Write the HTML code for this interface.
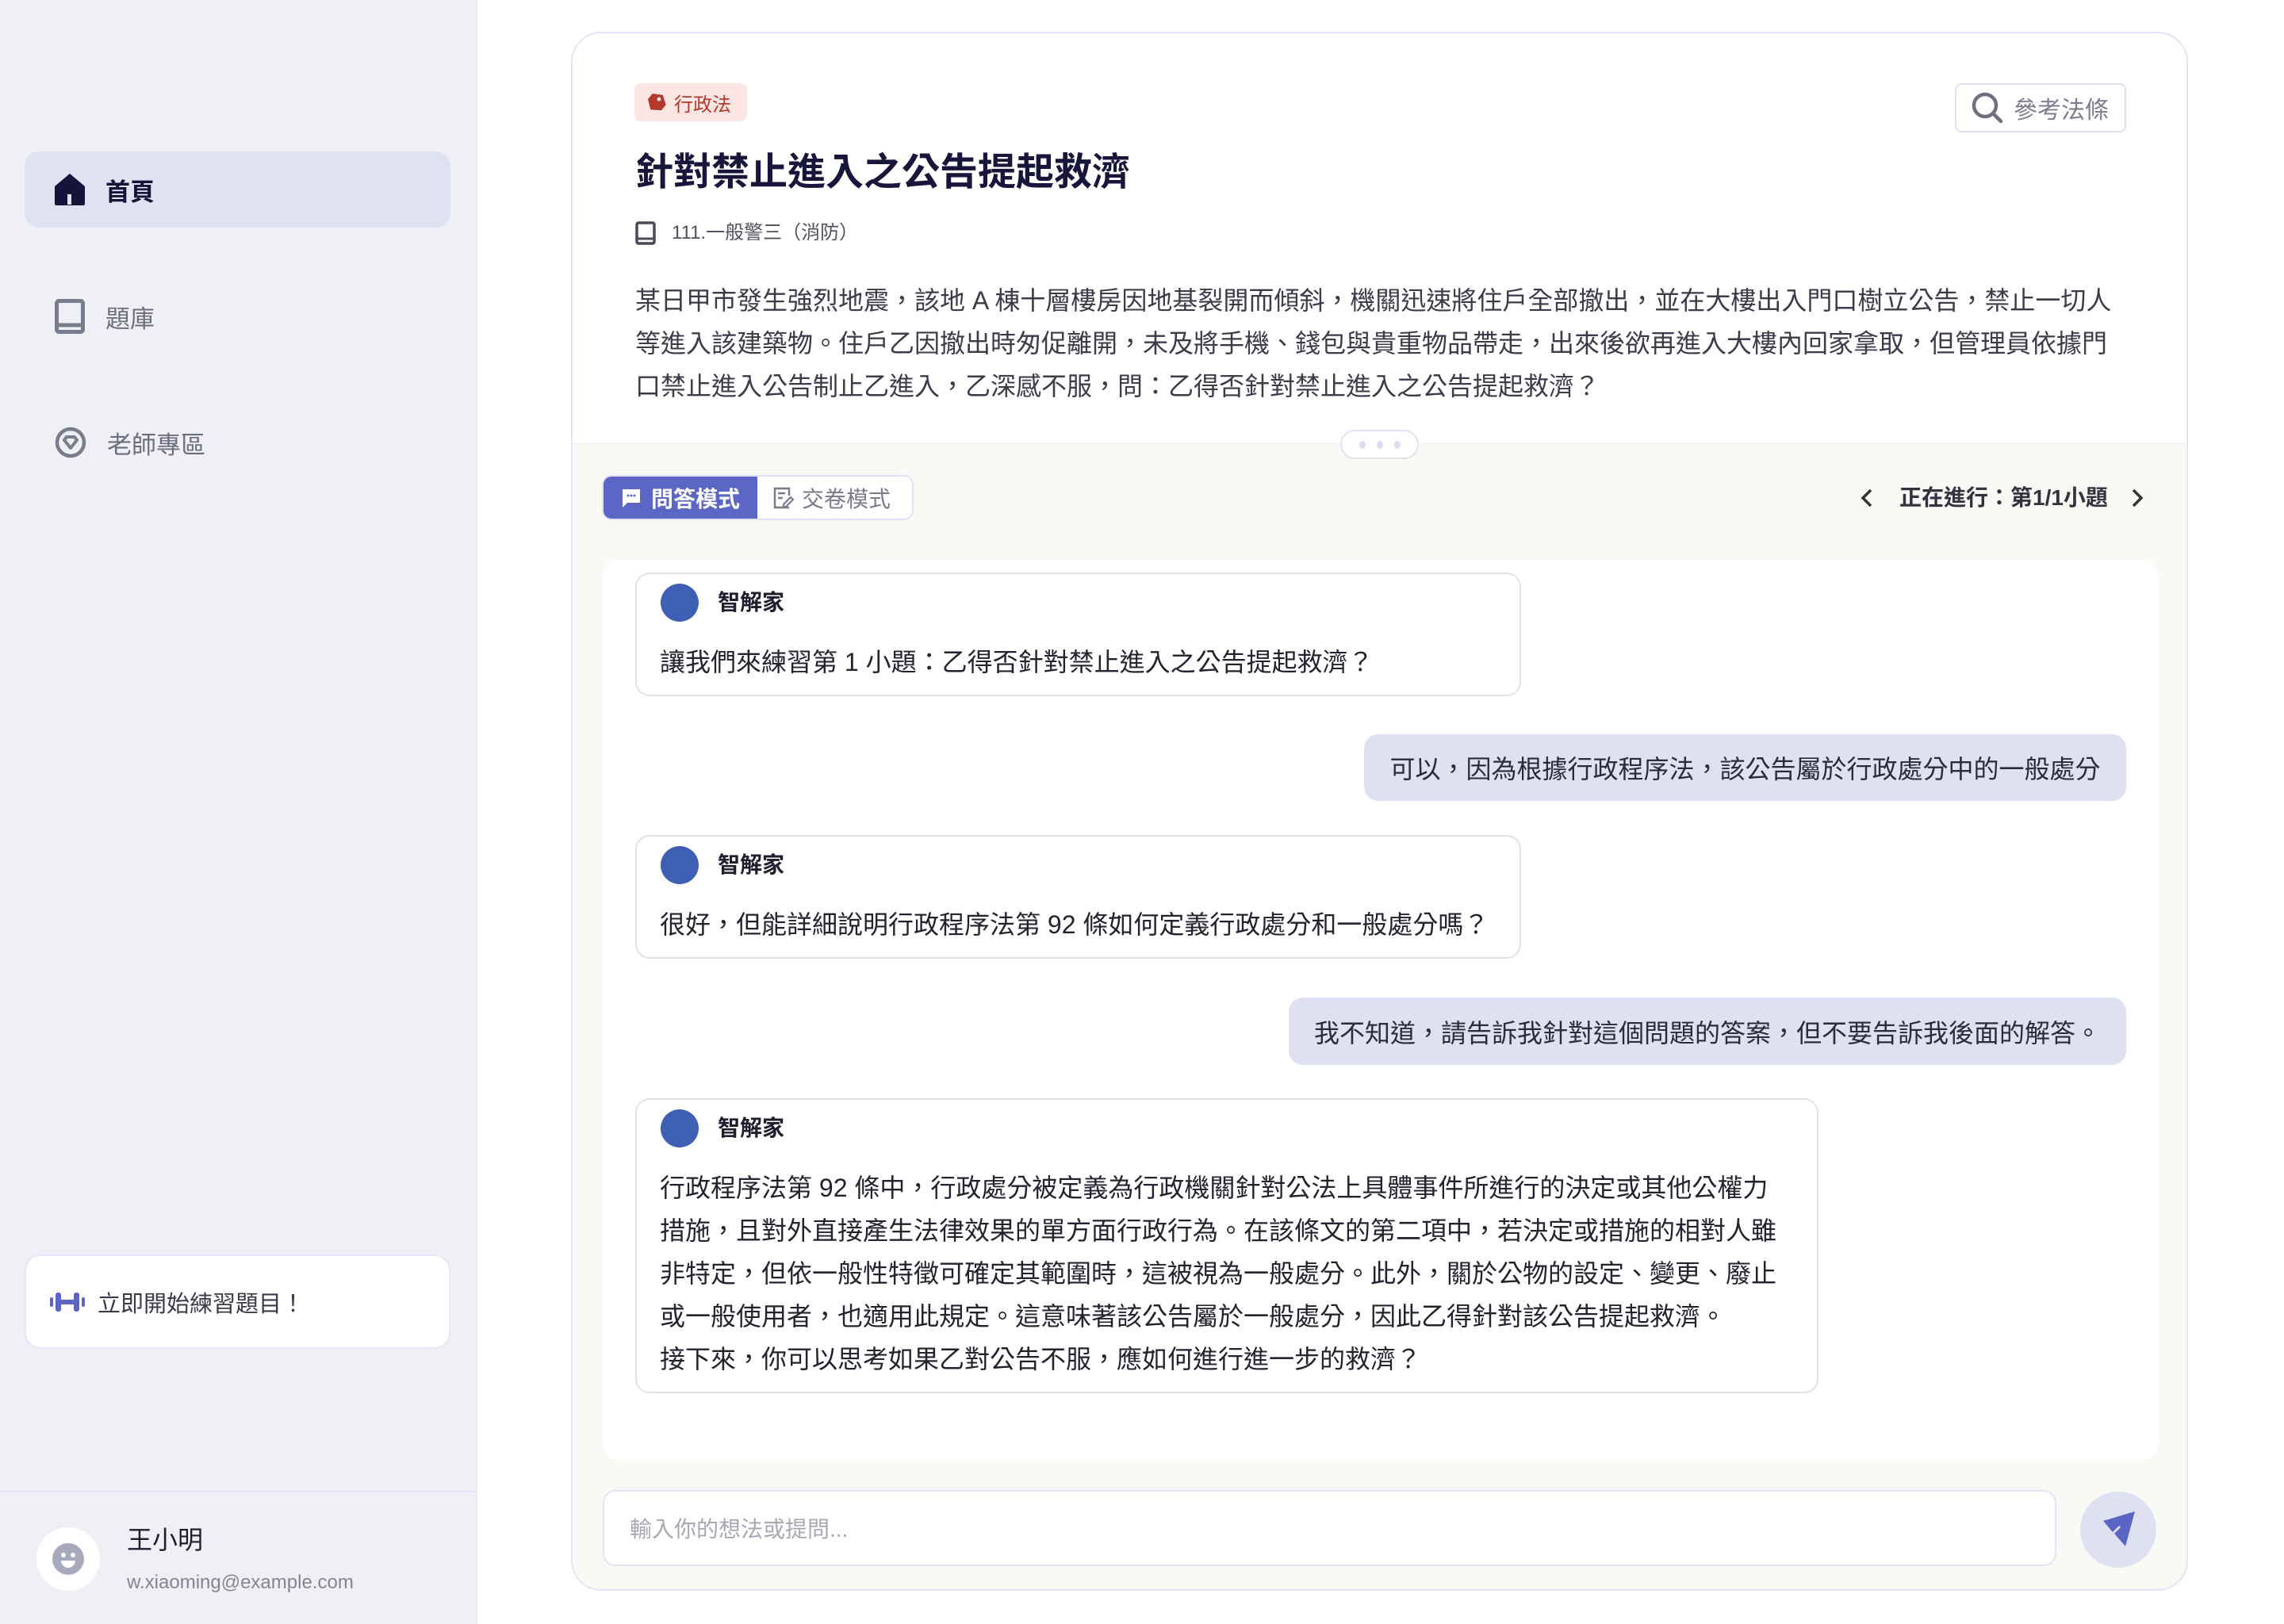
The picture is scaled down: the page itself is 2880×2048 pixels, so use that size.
<!DOCTYPE html>
<html><head><meta charset="utf-8"><style>
*{margin:0;padding:0;box-sizing:border-box}
body{width:2880px;height:2048px;position:relative;background:#fff;font-family:"Liberation Sans","Noto Sans CJK TC",sans-serif;color:#2b2b3a;overflow:hidden}
.a{position:absolute}
.side{left:0;top:0;width:602px;height:2048px;background:#eff0f5;border-right:2px solid #e6e6f6}
.nav{left:31px;width:537px;height:96px;border-radius:18px;display:flex;align-items:center;padding-left:38px;font-size:31px;color:#6d6d80}
.nav svg{margin-right:26px}
.card{left:720px;top:40px;width:2039px;height:1966px;border:2px solid #e4e4f7;border-radius:38px;background:#f9f9f6;overflow:hidden}
.top{left:0;top:0;width:100%;height:518px;background:#fff;border-bottom:1px solid #efefec}
.bubble{background:#fff;border:2px solid #dfe2ea;border-radius:18px}
.bot .av{position:absolute;left:30px;top:12px;width:48px;height:48px;border-radius:50%;background:#3e5fb3}
.bot .nm{position:absolute;left:102px;top:14px;font-size:28px;font-weight:bold;color:#1e1e2e;line-height:44px}
.bot .tx{position:absolute;left:29px;font-size:32px;line-height:54px;white-space:nowrap;color:#23232f}
.user{background:#dfe1f2;border-radius:18px;font-size:32px;color:#2b2b3a;display:flex;align-items:center;justify-content:center;white-space:nowrap}
</style></head><body>
<div class="a side">
  <div class="a nav" style="top:191px;background:#e0e2f2;color:#15133a;font-weight:bold">
    <svg width="38" height="40" viewBox="0 0 38 40"><path d="M19 0 L38 16 V38 a2 2 0 0 1-2 2 H2 a2 2 0 0 1-2-2 V16 Z" fill="#15133a"/><rect x="16" y="26" width="5" height="13" fill="#e0e2f2"/></svg>首頁</div>
  <div class="a nav" style="top:351px">
    <svg width="38" height="44" viewBox="0 0 38 44"><rect x="2.5" y="2.5" width="33" height="39" rx="3" fill="none" stroke="#7b7b8e" stroke-width="5"/><line x1="2.5" y1="33" x2="35" y2="33" stroke="#7b7b8e" stroke-width="5"/></svg>題庫</div>
  <div class="a nav" style="top:510px">
    <svg width="40" height="40" viewBox="0 0 40 40"><circle cx="20" cy="20" r="17" fill="none" stroke="#7b7b8e" stroke-width="4.5"/><path d="M12 17 L15 13 H25 L28 17 L20 27 Z" fill="none" stroke="#7b7b8e" stroke-width="4" stroke-linejoin="round"/></svg>老師專區</div>
  <div class="a" style="left:31px;top:1582px;width:537px;height:119px;background:#fff;border:2px solid #e6e6f6;border-radius:20px;display:flex;align-items:center;padding-left:30px;font-size:29px;color:#3a3a48">
    <svg width="44" height="26" viewBox="0 0 44 26" style="margin-right:16px"><rect x="0" y="7" width="4" height="12" rx="2" fill="#5b66c4"/><rect x="7" y="1" width="7" height="24" rx="3" fill="#5b66c4"/><rect x="14" y="10" width="16" height="6" fill="#5b66c4"/><rect x="30" y="1" width="7" height="24" rx="3" fill="#5b66c4"/><rect x="40" y="7" width="4" height="12" rx="2" fill="#5b66c4"/></svg>立即開始練習題目！</div>
  <div class="a" style="left:0;top:1880px;width:600px;height:2px;background:#e4e4f6"></div>
  <div class="a" style="left:46px;top:1926px;width:80px;height:80px;border-radius:50%;background:#fff"></div>
  <svg class="a" style="left:66px;top:1946px" width="40" height="40" viewBox="0 0 40 40"><circle cx="20" cy="20" r="20" fill="#a9a9bd"/><circle cx="14" cy="15" r="3" fill="#fff"/><circle cx="26" cy="15" r="3" fill="#fff"/><path d="M11 22 H29 A9 9 0 0 1 11 22Z" fill="#fff"/></svg>
  <div class="a" style="left:160px;top:1922px;font-size:32px;color:#1e1e2e;line-height:40px">王小明</div>
  <div class="a" style="left:160px;top:1981px;font-size:24px;color:#858592;line-height:30px">w.xiaoming@example.com</div>
</div>

<div class="a card">
  <div class="a top"></div>
  <div class="a" style="left:78px;top:63px;width:142px;height:48px;background:#fce6e4;border-radius:8px;display:flex;align-items:center;padding-left:16px;font-size:24px;color:#b3392c">
    <svg width="24" height="26" viewBox="0 0 24 26" style="margin-right:10px"><path d="M12 1 L23 8 V17 L12 25 L1 17 V8Z" fill="#b3392c" transform="rotate(40 12 13)"/><circle cx="15" cy="9" r="2.5" fill="#fce6e4"/></svg>行政法</div>
  <div class="a" style="left:1743px;top:63px;width:216px;height:62px;border:2px solid #e0e0f5;border-radius:8px;display:flex;align-items:center;padding-left:18px;font-size:30px;color:#7c7c8e">
    <svg width="42" height="42" viewBox="0 0 42 42" style="margin-right:12px"><circle cx="18" cy="18" r="14" fill="none" stroke="#6f6f82" stroke-width="4.5"/><line x1="28" y1="28" x2="38" y2="38" stroke="#6f6f82" stroke-width="4.5" stroke-linecap="round"/></svg>參考法條</div>
  <div class="a" style="left:79px;top:146px;font-size:48px;font-weight:bold;color:#18163a;line-height:60px">針對禁止進入之公告提起救濟</div>
  <div class="a" style="left:79px;top:236px;font-size:24px;color:#50505e;line-height:32px;display:flex;align-items:center">
    <svg width="26" height="30" viewBox="0 0 26 30" style="margin-right:20px"><rect x="2" y="2" width="22" height="26" rx="2" fill="none" stroke="#4a4a58" stroke-width="3.5"/><line x1="2" y1="22" x2="24" y2="22" stroke="#4a4a58" stroke-width="3"/></svg>111.一般警三（消防）</div>
  <div class="a" style="left:79px;top:310px;font-size:32px;line-height:54px;color:#3b3b4a;white-space:nowrap">某日甲市發生強烈地震，該地 A 棟十層樓房因地基裂開而傾斜，機關迅速將住戶全部撤出，並在大樓出入門口樹立公告，禁止一切人<br>等進入該建築物。住戶乙因撤出時匆促離開，未及將手機、錢包與貴重物品帶走，出來後欲再進入大樓內回家拿取，但管理員依據門<br>口禁止進入公告制止乙進入，乙深感不服，問：乙得否針對禁止進入之公告提起救濟？</div>
  <div class="a" style="left:968px;top:500px;width:99px;height:37px;border:2px solid #e2e2f6;border-radius:19px;background:#fff;display:flex;justify-content:center;align-items:center;gap:14px">
    <span style="width:8px;height:10px;border-radius:50%;background:#dcdcef"></span><span style="width:8px;height:10px;border-radius:50%;background:#dcdcef"></span><span style="width:8px;height:10px;border-radius:50%;background:#dcdcef"></span></div>
  <div class="a" style="left:37px;top:557px;width:393px;height:57px;border:2px solid #e2e2f6;border-radius:12px;background:#fff;overflow:hidden">
    <div class="a" style="left:-2px;top:-2px;width:196px;height:57px;background:#5c66c4;display:flex;align-items:center;padding-left:24px;color:#fff;font-size:28px;font-weight:bold">
      <svg width="26" height="26" viewBox="0 0 26 26" style="margin-right:12px"><path d="M2 2 H24 V19 H8 L2 25Z" fill="#fff"/><circle cx="9" cy="10" r="1.5" fill="#5c66c4"/><circle cx="13" cy="10" r="1.5" fill="#5c66c4"/><circle cx="17" cy="10" r="1.5" fill="#5c66c4"/></svg>問答模式</div>
    <div class="a" style="left:214px;top:0;height:53px;display:flex;align-items:center;font-size:28px;color:#7a7a8a">
      <svg width="26" height="28" viewBox="0 0 26 28" style="margin-right:10px"><path d="M20 11 V2 H2 V26 H20" fill="none" stroke="#7a7a8a" stroke-width="2.5"/><line x1="6" y1="8" x2="15" y2="8" stroke="#7a7a8a" stroke-width="2.5"/><line x1="6" y1="14" x2="12" y2="14" stroke="#7a7a8a" stroke-width="2.5"/><path d="M13 22 L22 13 L25 16 L16 25 H13Z" fill="none" stroke="#7a7a8a" stroke-width="2.2"/></svg>交卷模式</div>
  </div>
  <svg class="a" style="left:1622px;top:573px" width="20" height="26" viewBox="0 0 20 26"><path d="M15 3 L5 13 L15 23" fill="none" stroke="#333" stroke-width="3.5"/></svg>
  <div class="a" style="left:1673px;top:566px;font-size:28px;font-weight:bold;color:#33333f;line-height:40px">正在進行：第1/1小題</div>
  <svg class="a" style="left:1963px;top:573px" width="20" height="26" viewBox="0 0 20 26"><path d="M5 3 L15 13 L5 23" fill="none" stroke="#333" stroke-width="3.5"/></svg>

  <div class="a" style="left:38px;top:664px;width:1961px;height:1135px;background:#fff;border-radius:20px"></div>

  <div class="a bubble bot" style="left:79px;top:680px;width:1117px;height:156px"><div class="av"></div><div class="nm">智解家</div><div class="tx" style="top:84px">讓我們來練習第 1 小題：乙得否針對禁止進入之公告提起救濟？</div></div>
  <div class="a user" style="left:998px;top:884px;width:961px;height:84px">可以，因為根據行政程序法，該公告屬於行政處分中的一般處分</div>
  <div class="a bubble bot" style="left:79px;top:1011px;width:1117px;height:156px"><div class="av"></div><div class="nm">智解家</div><div class="tx" style="top:84px">很好，但能詳細說明行政程序法第 92 條如何定義行政處分和一般處分嗎？</div></div>
  <div class="a user" style="left:903px;top:1216px;width:1056px;height:85px">我不知道，請告訴我針對這個問題的答案，但不要告訴我後面的解答。</div>
  <div class="a bubble bot" style="left:79px;top:1343px;width:1492px;height:372px"><div class="av"></div><div class="nm">智解家</div><div class="tx" style="top:84px">行政程序法第 92 條中，行政處分被定義為行政機關針對公法上具體事件所進行的決定或其他公權力<br>措施，且對外直接產生法律效果的單方面行政行為。在該條文的第二項中，若決定或措施的相對人雖<br>非特定，但依一般性特徵可確定其範圍時，這被視為一般處分。此外，關於公物的設定、變更、廢止<br>或一般使用者，也適用此規定。這意味著該公告屬於一般處分，因此乙得針對該公告提起救濟。<br>接下來，你可以思考如果乙對公告不服，應如何進行進一步的救濟？</div></div>

  <div class="a" style="left:38px;top:1837px;width:1833px;height:96px;background:#fff;border:2px solid #e4e4f7;border-radius:16px;display:flex;align-items:center;padding-left:32px;font-size:28px;color:#a8a8b2">輸入你的想法或提問...</div>
  <div class="a" style="left:1901px;top:1839px;width:96px;height:96px;border-radius:50%;background:#dfe1f2"></div>
  <svg class="a" style="left:1922px;top:1860px" width="54" height="54" viewBox="0 0 54 54"><path d="M8 16 L48 4 L36 48 L22 32 L30 24 L28 22 L20 30 Z" fill="#5b66c4"/></svg>
</div>
</body></html>
